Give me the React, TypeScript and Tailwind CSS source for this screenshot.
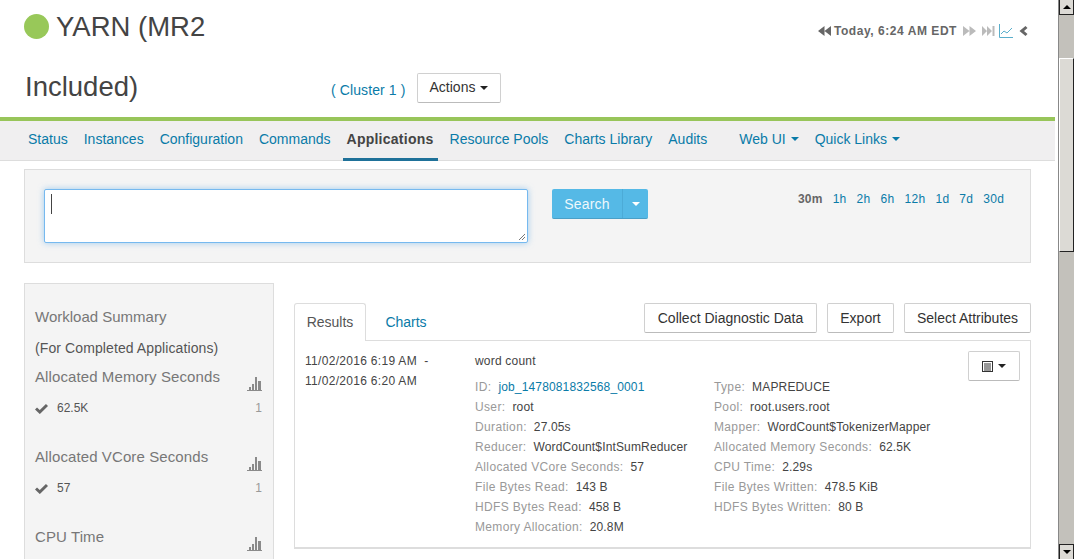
const sans = "font-['Liberation_Sans',Arial,sans-serif]";

const navLinks = ["Status", "Instances", "Configuration", "Commands"];
const navLinksAfter = ["Resource Pools", "Charts Library", "Audits"];
const timeRanges = ["1h", "2h", "6h", "12h", "1d", "7d", "30d"];

const leftRows: [string, string][] = [
  ["User:", "root"],
  ["Duration:", "27.05s"],
  ["Reducer:", "WordCount$IntSumReducer"],
  ["Allocated VCore Seconds:", "57"],
  ["File Bytes Read:", "143 B"],
  ["HDFS Bytes Read:", "458 B"],
  ["Memory Allocation:", "20.8M"],
];

const rightRows: [string, string][] = [
  ["Type:", "MAPREDUCE"],
  ["Pool:", "root.users.root"],
  ["Mapper:", "WordCount$TokenizerMapper"],
  ["Allocated Memory Seconds:", "62.5K"],
  ["CPU Time:", "2.29s"],
  ["File Bytes Written:", "478.5 KiB"],
  ["HDFS Bytes Written:", "80 B"],
];

function Caret({ className }: { className: string }) {
  return <span className={`inline-block w-0 h-0 border-x-[4px] border-x-transparent border-t-[4px] ${className}`} />;
}

function Bars() {
  return (
    <svg width="16" height="16" viewBox="0 0 16 16" fill="#8a8a8a">
      <rect x="0" y="14" width="15" height="1" />
      <rect x="2" y="11" width="2" height="3" />
      <rect x="5" y="8" width="2" height="6" />
      <rect x="8" y="1" width="2" height="13" />
      <rect x="11" y="5" width="3" height="9" />
    </svg>
  );
}

function Check() {
  return (
    <svg width="13" height="11" viewBox="0 0 13 11" fill="none" stroke="#666" strokeWidth="3">
      <path d="M1 5.5 L4.8 9 L12 2" />
    </svg>
  );
}

function SummaryGroup({ title, value, count }: { title: string; value?: string; count?: string }) {
  return (
    <div className="h-[80px]">
      <div className="flex justify-between items-start h-[30px] pr-[10px]">
        <span className="text-[15px] leading-[20px] tracking-[0.1px] text-[#777]">{title}</span>
        <span className="mt-[9px]"><Bars /></span>
      </div>
      {value && (
        <div className="flex items-center justify-between h-[20px] mt-[1px] pr-[11px] text-[12px] text-[#555]">
          <span className="flex items-center gap-[9px]">
            <Check />
            {value}
          </span>
          <span className="text-[#999]">{count}</span>
        </div>
      )}
    </div>
  );
}

function Row({ label, value, link }: { label: string; value: string; link?: boolean }) {
  return (
    <div className="h-[20px] leading-[20px] whitespace-nowrap">
      <span className="text-[#999] tracking-[0.35px]">{label}</span>
      <span className={`ml-[7px] tracking-[0.15px] ${link ? "text-[#0a7ba8]" : "text-[#444]"}`}>{value}</span>
    </div>
  );
}

function Btn({ children, className = "" }: { children: React.ReactNode; className?: string }) {
  return (
    <button className={`h-[30px] bg-white border border-[#d0d0d0] border-b-[#bbb] rounded-[2px] text-[14px] text-[#333] ${className}`}>
      {children}
    </button>
  );
}

export default function App() {
  return (
    <div className={`${sans} w-[1074px] h-[559px] overflow-hidden flex bg-white text-[#444]`}>
      <div className="w-[1055px] shrink-0">
        {/* header */}
        <div className="h-[117px] flex justify-between">
          <div className="w-[510px] pl-[24px] shrink-0">
            <div className="flex items-center h-[53px] gap-[7px]">
              <span className="w-[25px] h-[25px] rounded-full bg-[#98c859]" />
              <span className="text-[27.5px] text-[#444]">YARN (MR2</span>
            </div>
            <div className="flex items-center h-[64px]">
              <span className="text-[27.5px] text-[#444] w-[307px] pl-[1px] mt-[4px]">Included)</span>
              <span className="text-[14px] text-[#0a7ba8] w-[86px] mt-[11px] tracking-[0.1px]">( Cluster 1 )</span>
              <Btn className="w-[84px] mt-[5px] flex items-center justify-center gap-[5px]">
                Actions
                <Caret className="border-t-[#222]" />
              </Btn>
            </div>
          </div>
          <div className="flex items-center h-[20px] mt-[21px] pr-[27px]">
            <svg width="13" height="12" viewBox="0 0 13 12" fill="#666"><path d="M6.500 1v10L0 6zM13 1v10L6.500 6z" /></svg>
            <span className="ml-[3px] text-[12px] font-bold text-[#666] tracking-[0.55px]">Today, 6:24 AM EDT</span>
            <svg width="13" height="12" viewBox="0 0 13 12" fill="#bbb" className="ml-[6px]"><path d="M0 1v10l6.500-5zM6.500 1v10L13 6z" /></svg>
            <svg width="13" height="12" viewBox="0 0 13 12" fill="#bbb" className="ml-[6px]"><path d="M0 1v10l5-5zM5 1v10l5-5zM10.500 1h2v10h-2z" /></svg>
            <svg width="14" height="14" viewBox="0 0 14 14" fill="none" stroke="#5aaecb" className="ml-[4px]"><path d="M.5 0v13.500H14M2 10l3-3 3 2 5-5" /></svg>
            <svg width="9" height="12" viewBox="0 0 8 12" fill="#666" className="ml-[6px]"><path d="M6 1 L8 3 L4.500 6 L8 9 L6 11 L0 6z" /></svg>
          </div>
        </div>
        <div className="h-[4px] bg-[#98c55a]" />

        {/* nav */}
        <nav className="h-[40px] bg-[#f0eff0] border-b border-[#ddd] flex pl-[28px] text-[14px] text-[#0a7ba8]">
          {navLinks.map((l) => (
            <span key={l} className="leading-[36px] mr-[16px]">{l}</span>
          ))}
          <span className="font-bold text-[#444] leading-[36px] tracking-[0.25px] px-[4px] h-[40px] border-b-[3px] border-[#1f7199] -ml-[4px] mr-[12px]">
            Applications
          </span>
          {navLinksAfter.map((l) => (
            <span key={l} className="leading-[36px] mr-[16px]">{l}</span>
          ))}
          <span className="leading-[36px] ml-[16px] mr-[16px] flex items-center gap-[5px] h-[36px]">
            Web UI <Caret className="border-t-[#0a7ba8]" />
          </span>
          <span className="leading-[36px] flex items-center gap-[5px] h-[36px]">
            Quick Links <Caret className="border-t-[#0a7ba8]" />
          </span>
        </nav>

        {/* search */}
        <div className="ml-[24px] mt-[8px] w-[1007px] h-[94px] bg-[#f4f4f4] border border-[#ddd] flex pl-[19px] pt-[19px]">
          <div className="relative w-[484px] h-[54px] bg-white border border-[#76b9ef] rounded-[2px] shadow-[0_0_6px_rgba(102,175,233,0.6)]">
            <span className="absolute left-[6px] top-[4px] w-[1px] h-[20px] bg-[#444]" />
            <svg width="8" height="8" viewBox="0 0 8 8" stroke="#777" className="absolute right-[1px] bottom-[1px]"><path d="M1 7l6-6M4 7l3-3" /></svg>
          </div>
          <div className="ml-[24px] flex h-[30px] w-[96px] rounded-[2px] bg-[#55b9e6] border-b border-[#4a9fc7] text-white text-[14px]">
            <span className="w-[71px] text-center leading-[30px] tracking-[0.2px] border-r border-[#4caad6] opacity-90">Search</span>
            <span className="flex-1 flex items-center justify-center"><Caret className="border-t-white" /></span>
          </div>
          <div className="ml-[150px] mt-[2px] flex gap-[10px] h-[16px] text-[12px] leading-[16px] tracking-[0.3px] text-[#0a7ba8]">
            <span className="font-bold text-[#666] tracking-[0.2px]">30m</span>
            {timeRanges.map((t) => (
              <span key={t}>{t}</span>
            ))}
          </div>
        </div>

        {/* body */}
        <div className="flex ml-[24px] mt-[20px]">
          <aside className="w-[250px] h-[300px] bg-[#f4f4f4] border border-[#ddd] pl-[10px] pt-[23px] shrink-0">
            <div className="text-[15px] leading-[20px] text-[#777] h-[31px]">Workload Summary</div>
            <div className="text-[14px] leading-[20px] tracking-[0.1px] text-[#555] h-[29px]">(For Completed Applications)</div>
            <SummaryGroup title="Allocated Memory Seconds" value="62.5K" count="1" />
            <SummaryGroup title="Allocated VCore Seconds" value="57" count="1" />
            <SummaryGroup title="CPU Time" />
          </aside>

          <section className="ml-[20px] mt-[20px] w-[737px]">
            <div className="flex h-[37px] relative">
              <div className="w-[72px] h-[38px] bg-white border border-[#ddd] border-b-0 rounded-t-[3px] text-center leading-[37px] text-[14px] text-[#555] z-10">
                Results
              </div>
              <div className="w-[80px] text-center leading-[38px] text-[14px] text-[#0a7ba8]">Charts</div>
              <div className="ml-auto flex gap-[10px]">
                <Btn className="w-[173px]">Collect Diagnostic Data</Btn>
                <Btn className="w-[67px]">Export</Btn>
                <Btn className="w-[127px]">Select Attributes</Btn>
              </div>
            </div>
            <div className="relative h-[209px] border border-[#ddd] border-b-[2px] flex pl-[10px] pt-[10px] text-[12px]">
              <div className="w-[170px] leading-[20px] tracking-[0.3px] text-[#444] whitespace-nowrap">
                <div>11/02/2016 6:19 AM&nbsp; -</div>
                <div>11/02/2016 6:20 AM</div>
              </div>
              <div>
                <div className="h-[26px] leading-[20px] tracking-[0.2px] text-[#444]">word count</div>
                <div className="flex">
                  <div className="w-[239px]">
                    <Row label="ID:" value="job_1478081832568_0001" link />
                    {leftRows.map(([l, v]) => (
                      <Row key={l} label={l} value={v} />
                    ))}
                  </div>
                  <div>
                    {rightRows.map(([l, v]) => (
                      <Row key={l} label={l} value={v} />
                    ))}
                  </div>
                </div>
              </div>
              <button className="absolute right-[10px] top-[10px] w-[52px] h-[30px] bg-white border border-[#d0d0d0] border-b-[#bbb] rounded-[2px] flex items-center justify-center gap-[5px]">
                <svg width="11" height="11" viewBox="0 0 11 11" fill="none" stroke="#333">
                  <rect x=".5" y=".5" width="10" height="10" />
                  <path d="M2 3h7M2 5h7M2 7h7M2 9h7" />
                </svg>
                <Caret className="border-t-[#222]" />
              </button>
            </div>
          </section>
        </div>
      </div>

      {/* scrollbar */}
      <div className="ml-[3px] w-[16px] h-[559px] flex flex-col bg-[#c3c1bb] border-l border-[#888]">
        <div className="h-[15px] bg-[#dcdad5] border border-[#222] border-t-0 flex items-center justify-center">
          <span className="w-0 h-0 border-x-[4px] border-x-transparent border-b-[4px] border-b-black" />
        </div>
        <div className="h-[43px]" />
        <div className="h-[194px] bg-[#dcdad5] border border-t-white border-l-white border-[#222]" />
        <div className="flex-1" />
        <div className="h-[15px] bg-[#dcdad5] border border-[#222] border-b-0 flex items-center justify-center">
          <span className="w-0 h-0 border-x-[4px] border-x-transparent border-t-[4px] border-t-black" />
        </div>
      </div>
    </div>
  );
}
